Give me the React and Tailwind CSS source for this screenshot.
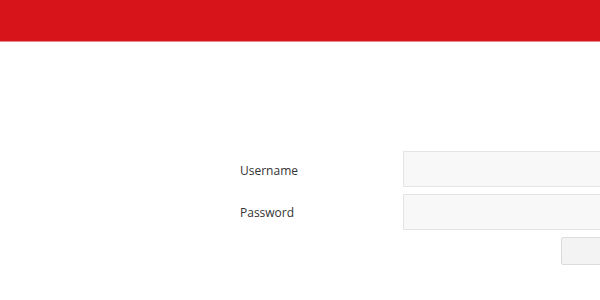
export default function App() {
  return (
    <div className="w-[600px] h-[300px] overflow-hidden bg-white" style={{ fontFamily: '"Open Sans", "Noto Sans", sans-serif' }}>
      <div className="h-[42px] bg-[#d7141a] border-b border-[#e88a8c]" />
      <div className="pt-[109px] pl-[240px]">
        <div className="w-[423px] flex flex-col gap-[7px]">
          <div className="flex items-center">
            <label className="w-[163px] pt-[3px] text-[12px] text-[#333]">Username</label>
            <input className="w-[260px] h-[36px] bg-[#f8f8f8] border border-[#e4e4e4] outline-none" />
          </div>
          <div className="flex items-center">
            <label className="w-[163px] pt-[2px] text-[12px] text-[#333]">Password</label>
            <input type="password" className="w-[260px] h-[36px] bg-[#f8f8f8] border border-[#e4e4e4] outline-none" />
          </div>
          <div className="flex justify-end">
            <button className="w-[102px] h-[28px] bg-[#f3f3f3] border border-[#dcdcdc] rounded-[2px]" />
          </div>
        </div>
      </div>
    </div>
  );
}
